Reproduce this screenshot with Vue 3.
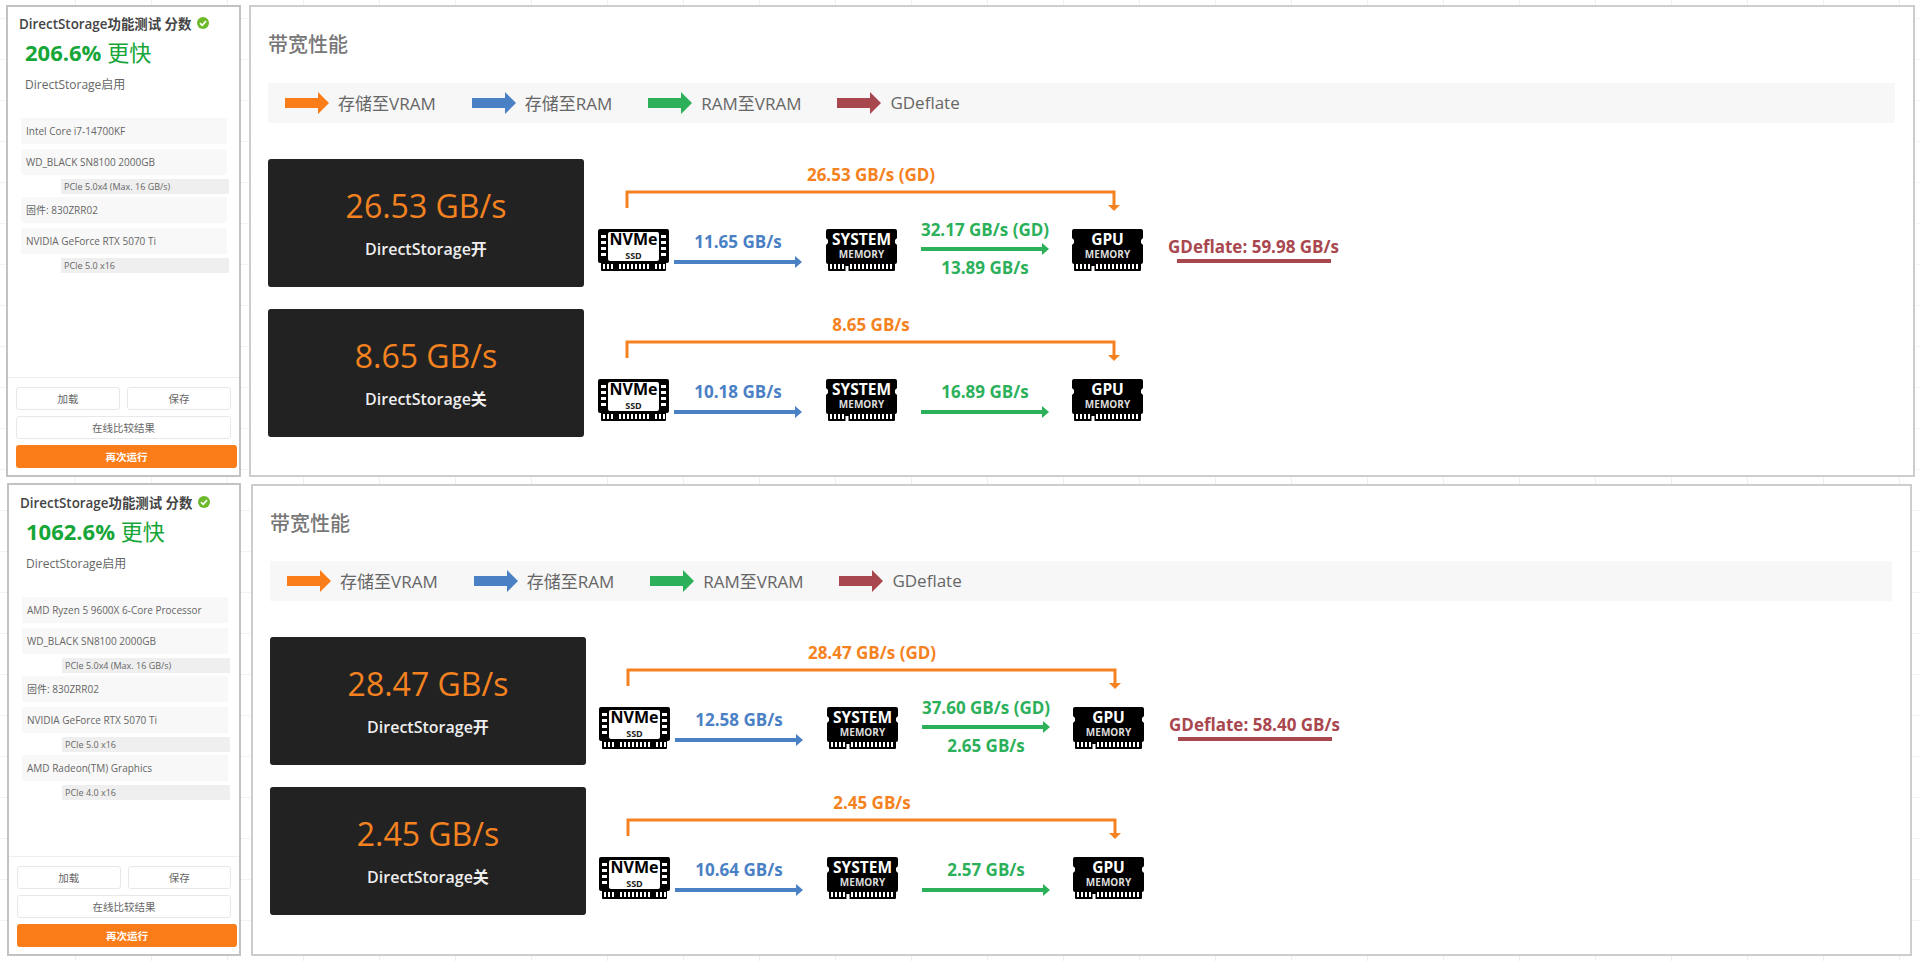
<template>
  <div class="page">
    <div v-for="(run, i) in runs" :key="i" class="run" :class="i === 0 ? 'run-a' : 'run-b'">
      <aside class="side">
        <div class="side-title">
          DirectStorage功能测试 分数
          <svg class="check" viewBox="0 0 12 12" width="12" height="12">
            <circle cx="6" cy="6" r="6" fill="#6cb92a" />
            <path d="M3 6.2 5.2 8.3 9 4.1" fill="none" stroke="#fff" stroke-width="1.7" />
          </svg>
        </div>
        <div class="score"><b>{{ run.score }}</b> 更快</div>
        <div class="enabled">DirectStorage启用</div>

        <div class="info-list">
          <div v-for="item in run.info" :key="item.text" :class="item.sub ? 'info-sub' : 'info-row'">
            {{ item.text }}
          </div>
        </div>

        <div class="side-foot">
          <div class="btn-line">
            <button class="btn">加载</button>
            <button class="btn">保存</button>
          </div>
          <div class="btn-line">
            <button class="btn">在线比较结果</button>
          </div>
          <button class="btn btn-run">再次运行</button>
        </div>
      </aside>

      <section class="main">
        <h2 class="main-title">带宽性能</h2>
        <div class="legend">
          <span v-for="l in legend" :key="l.label" class="legend-item">
            <svg width="44" height="22" viewBox="0 0 44 22">
              <polygon points="0,6 33,6 33,0 44,11 33,22 33,16 0,16" :fill="l.color" />
            </svg>
            <span class="legend-label">{{ l.label }}</span>
          </span>
        </div>

        <div v-for="b in run.benches" :key="b.name" class="bench">
          <div class="result">
            <div class="result-value">{{ b.total }}</div>
            <div class="result-name">{{ b.name }}</div>
          </div>

          <div class="diagram">
            <div class="total-label">{{ b.totalLabel }}</div>
            <svg class="bracket" width="498" height="24" viewBox="0 0 498 24">
              <polyline points="2,19 2,3 489,3 489,17" fill="none" stroke="#f58220" stroke-width="3" />
              <polygon points="483,16 495,16 489,22" fill="#f58220" />
            </svg>

            <div class="flow">
              <svg class="chip" width="73" height="42" viewBox="0 0 73 42">
                <path d="M3 0H70a2 2 0 0 1 2 2V32a2 2 0 0 1-2 2H69V41a1 1 0 0 1-1 1H5a1 1 0 0 1-1-1V34H3a2 2 0 0 1-2-2V2a2 2 0 0 1 2-2Z" fill="#000" />
                <rect x="11" y="3" width="51" height="29" rx="2" fill="#fff" />
                <g fill="#fff">
                  <rect v-for="y in [6, 12, 18, 24]" :key="'l' + y" x="4" :y="y" width="5" height="3" />
                  <rect v-for="y in [6, 12, 18, 24]" :key="'r' + y" x="64" :y="y" width="5" height="3" />
                  <rect v-for="x in pinsNvme" :key="x" :x="x" y="35" width="2" height="5" />
                </g>
                <text x="36.5" y="16" class="chip-nvme">NVMe</text>
                <text x="36.5" y="30.4" class="chip-ssd">SSD</text>
              </svg>

              <div class="link link-blue">
                <div class="link-label">{{ b.toRam }}</div>
                <svg class="link-arrow" width="128" height="12" viewBox="0 0 128 12">
                  <rect y="4" width="122" height="4" fill="currentColor" />
                  <polygon points="121,0 128,6 121,12" fill="currentColor" />
                </svg>
              </div>

              <svg class="chip" width="73" height="42" viewBox="0 0 73 42">
                <path :d="ramShape" fill="#000" />
                <g fill="#fff">
                  <rect v-for="x in pinsRam" :key="x" :x="x" y="35" width="2" height="5" />
                  <rect x="20.5" y="37" width="3" height="5" />
                </g>
                <text x="36.5" y="16" class="chip-top">SYSTEM</text>
                <text x="36.5" y="28.5" class="chip-sub">MEMORY</text>
              </svg>

              <div class="link link-green" :class="{ double: b.toVramGd }">
                <div v-if="b.toVramGd" class="link-label">{{ b.toVramGd }}</div>
                <div v-else class="link-label">{{ b.toVram }}</div>
                <svg class="link-arrow" width="128" height="12" viewBox="0 0 128 12">
                  <rect y="4" width="122" height="4" fill="currentColor" />
                  <polygon points="121,0 128,6 121,12" fill="currentColor" />
                </svg>
                <div v-if="b.toVramGd" class="link-label link-under">{{ b.toVram }}</div>
              </div>

              <svg class="chip" width="73" height="42" viewBox="0 0 73 42">
                <path :d="ramShape" fill="#000" />
                <g fill="#fff">
                  <rect v-for="x in pinsRam" :key="x" :x="x" y="35" width="2" height="5" />
                  <rect x="20.5" y="37" width="3" height="5" />
                </g>
                <text x="36.5" y="16" class="chip-top">GPU</text>
                <text x="36.5" y="28.5" class="chip-sub">MEMORY</text>
              </svg>

              <div v-if="b.gdeflate" class="gdeflate">
                <div class="gdeflate-text">GDeflate: {{ b.gdeflate }}</div>
                <div class="gdeflate-line" />
              </div>
            </div>
          </div>
        </div>
      </section>
    </div>
  </div>
</template>

<script setup>
const legend = [
  { label: '存储至VRAM', color: '#fb7d19' },
  { label: '存储至RAM', color: '#4a80c4' },
  { label: 'RAM至VRAM', color: '#2cb05a' },
  { label: 'GDeflate', color: '#a9474f' },
]

// memory stick outline, notched on both sides
const ramShape = 'M3 0H70a2 2 0 0 1 2 2V9l-2 2v3l2 2V33a2 2 0 0 1-2 2V41a1 1 0 0 1-1 1H4a1 1 0 0 1-1-1V35a2 2 0 0 1-2-2V16l2-2V11L1 9V2a2 2 0 0 1 2-2Z'

const pinsNvme = [6, 10, 14, 22, 26, 30, 34, 38, 42, 46, 50, 58, 62, 66]
const pinsRam = [5, 9, 13, 17, 25, 29, 33, 37, 41, 45, 49, 53, 57, 61, 65]

const runs = [
  {
    score: '206.6%',
    info: [
      { text: 'Intel Core i7-14700KF' },
      { text: 'WD_BLACK SN8100 2000GB' },
      { text: 'PCIe 5.0x4 (Max. 16 GB/s)', sub: true },
      { text: '固件: 830ZRR02' },
      { text: 'NVIDIA GeForce RTX 5070 Ti' },
      { text: 'PCIe 5.0 x16', sub: true },
    ],
    benches: [
      {
        name: 'DirectStorage开',
        total: '26.53 GB/s',
        totalLabel: '26.53 GB/s (GD)',
        toRam: '11.65 GB/s',
        toVramGd: '32.17 GB/s (GD)',
        toVram: '13.89 GB/s',
        gdeflate: '59.98 GB/s',
      },
      {
        name: 'DirectStorage关',
        total: '8.65 GB/s',
        totalLabel: '8.65 GB/s',
        toRam: '10.18 GB/s',
        toVram: '16.89 GB/s',
      },
    ],
  },
  {
    score: '1062.6%',
    info: [
      { text: 'AMD Ryzen 5 9600X 6-Core Processor' },
      { text: 'WD_BLACK SN8100 2000GB' },
      { text: 'PCIe 5.0x4 (Max. 16 GB/s)', sub: true },
      { text: '固件: 830ZRR02' },
      { text: 'NVIDIA GeForce RTX 5070 Ti' },
      { text: 'PCIe 5.0 x16', sub: true },
      { text: 'AMD Radeon(TM) Graphics' },
      { text: 'PCIe 4.0 x16', sub: true },
    ],
    benches: [
      {
        name: 'DirectStorage开',
        total: '28.47 GB/s',
        totalLabel: '28.47 GB/s (GD)',
        toRam: '12.58 GB/s',
        toVramGd: '37.60 GB/s (GD)',
        toVram: '2.65 GB/s',
        gdeflate: '58.40 GB/s',
      },
      {
        name: 'DirectStorage关',
        total: '2.45 GB/s',
        totalLabel: '2.45 GB/s',
        toRam: '10.64 GB/s',
        toVram: '2.57 GB/s',
      },
    ],
  },
]
</script>

<style>
html, body { margin: 0; background: #fff; }
</style>

<style scoped>
.page {
  width: 1920px;
  height: 961px;
  box-sizing: border-box;
  padding-top: 5px;
  display: flex;
  flex-direction: column;
  gap: 6px;
  overflow: hidden;
  font-family: "Open Sans", "Noto Sans CJK SC", sans-serif;
  background-color: #fff;
  background-image:
    repeating-linear-gradient(90deg, transparent 0 75px, #eee 75px 76px),
    repeating-linear-gradient(0deg, transparent 0 40px, #f3f3f3 40px 41px);
}

.run { display: flex; align-items: stretch; }
.run-a { height: 472px; gap: 8px; padding: 0 5px 0 6px; }
.run-b { height: 473px; gap: 10px; padding: 0 8px 0 7px; }

/* left column */
.side {
  width: 235px;
  flex-shrink: 0;
  box-sizing: border-box;
  border: 2px solid #c2c2c2;
  background: #fff;
  display: flex;
  flex-direction: column;
  padding-top: 6px;
}
.run-b .side { width: 234px; padding-top: 7px; }

.side-title {
  display: flex;
  align-items: center;
  gap: 6px;
  margin-left: 11px;
  height: 20px;
  font-size: 13.4px;
  font-weight: 600;
  color: #444;
}
.check { flex-shrink: 0; }

.score {
  margin: 3px 0 0 17px;
  font-size: 22px;
  line-height: 32px;
  color: #16a637;
}
.score b { font-size: 22px; font-weight: 700; }

.enabled {
  margin: 8px 0 0 17px;
  font-size: 12px;
  line-height: 18px;
  color: #666;
}

.info-list {
  margin: 24px 0 0 13px;
  width: 206px;
  display: flex;
  flex-direction: column;
  font-size: 10px;
  color: #666;
}
.info-row {
  height: 26px;
  line-height: 26px;
  padding-left: 5px;
  margin-bottom: 5px;
  background: #f8f8f8;
  white-space: nowrap;
}
.info-sub {
  height: 15px;
  line-height: 15px;
  margin: -1px -2px 3px 40px;
  padding-left: 3px;
  font-size: 9px;
  background: #efefef;
}

.side-foot {
  margin-top: auto;
  border-top: 1px solid #eee;
  padding: 9px 2px 7px 8px;
  display: flex;
  flex-direction: column;
  gap: 6px;
}
.btn-line { display: flex; gap: 7px; margin-right: 6px; }
.btn {
  flex: 1;
  height: 23px;
  padding: 0;
  border: 1px solid #e8e8e8;
  border-radius: 3px;
  background: #fff;
  font-family: inherit;
  font-size: 10.5px;
  color: #666;
}
.btn-run {
  flex: none;
  border: 0;
  background: #fb7d19;
  color: #fff;
  font-weight: 700;
}

/* right panel */
.main {
  flex: 1;
  box-sizing: border-box;
  border: 2px solid #cdcdcd;
  background: #fff;
  padding: 24px 18px 0 17px;
}
.run-b .main { margin: 1px 0 0; }
.run-b .main-title { margin-bottom: 23px; }
.run-b .bench { gap: 12px; }

.main-title {
  margin: 0 0 24px;
  font-size: 20px;
  line-height: 28px;
  font-weight: 500;
  color: #777;
}

.legend {
  height: 40px;
  margin-bottom: 36px;
  padding-left: 17px;
  display: flex;
  align-items: center;
  gap: 36px;
  background: #f7f7f7;
  font-size: 17px;
  color: #666;
}
.legend-item { display: flex; align-items: center; gap: 9px; }
.legend-label { margin-bottom: 2px; }

.bench {
  height: 128px;
  margin-bottom: 22px;
  display: flex;
  gap: 13px;
}

.result {
  width: 316px;
  height: 128px;
  flex-shrink: 0;
  border-radius: 3px;
  background: #222;
  text-align: center;
}
.result-value {
  margin-top: 25px;
  font-size: 32px;
  line-height: 44px;
  color: #f58220;
}
.result-name {
  margin-top: 9px;
  font-size: 16px;
  line-height: 24px;
  font-weight: 600;
  color: #eee;
}

.diagram { padding-top: 4px; }
.total-label {
  width: 548px;
  text-align: center;
  font-size: 17px;
  line-height: 24px;
  font-weight: 700;
  color: #f58220;
}
.bracket { display: block; margin: 2px 0 0 28px; }

.flow { display: flex; align-items: flex-start; margin-top: 16px; height: 42px; }
.chip { flex-shrink: 0; display: block; }
.chip text { text-anchor: middle; font-family: "Open Sans", sans-serif; font-weight: 700; }
.chip-nvme { font-size: 16px; fill: #000; }
.chip-ssd { font-size: 9px; fill: #222; }
.chip-top { font-size: 15.5px; fill: #fff; }
.chip-sub { font-size: 10px; fill: #ddd; }

.link { box-sizing: border-box; height: 42px; }
.link-blue { width: 155px; padding-left: 4px; color: #4a80c4; }
.link-green { width: 173px; padding-left: 23px; color: #2cb05a; }
.link-label {
  width: 128px;
  font-size: 17px;
  line-height: 24px;
  font-weight: 700;
  white-space: nowrap;
  margin-top: 1px;
  display: flex;
  justify-content: center;
}
.link-arrow { display: block; margin-top: 2px; }
.double .link-label { margin-top: -10px; line-height: 22px; }
.double .link-arrow { margin-top: 2px; }
.double .link-under { margin-top: 2px; }

.gdeflate { margin: 6px 0 0 24px; color: #a9474f; }
.gdeflate-text {
  font-size: 17px;
  line-height: 24px;
  font-weight: 700;
  white-space: nowrap;
}
.gdeflate-line { width: 154px; height: 4px; margin-left: 9px; background: #a9474f; }
</style>
